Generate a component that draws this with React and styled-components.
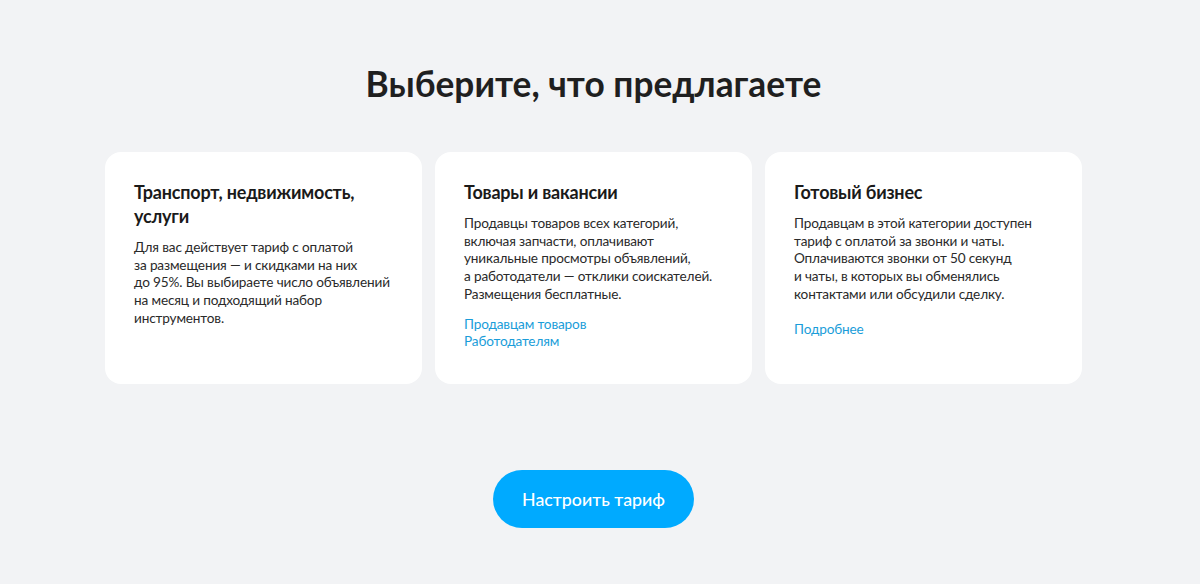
import React from "react";
import styled, { createGlobalStyle } from "styled-components";

const Global = createGlobalStyle`
  html, body { margin: 0; padding: 0; }
  body {
    background: #f2f3f5;
    font-family: Lato, "Noto Sans", sans-serif;
    color: #1a1a1a;
    -webkit-font-smoothing: antialiased;
  }
`;

const Page = styled.main`
  min-height: 584px;
  display: flex;
  flex-direction: column;
  align-items: center;
  padding: 62px 13px 0 0;
  box-sizing: border-box;
`;

const Title = styled.h1`
  margin: 0;
  font-size: 35.3px;
  line-height: 44px;
  font-weight: 700;
  color: #1f1f1f;
`;

const Cards = styled.section`
  margin-top: 46px;
  display: grid;
  grid-template-columns: repeat(3, 317px);
  gap: 13px;
`;

const Card = styled.article`
  background: #ffffff;
  border-radius: 16px;
  height: 232px;
  box-sizing: border-box;
  padding: 28px 29px;
`;

const CardTitle = styled.h2`
  margin: 0;
  font-size: 18px;
  line-height: 24px;
  font-weight: 700;
  letter-spacing: -0.2px;
  color: #1a1a1a;
`;

const Text = styled.p`
  margin: 11px 0 0;
  font-size: 13.6px;
  line-height: 17.7px;
  letter-spacing: -0.15px;
  color: #2a2a2a;
  white-space: nowrap;
`;

const Links = styled.div`
  margin-top: ${(p) => p.$offset || 12}px;
  display: flex;
  flex-direction: column;
`;

const Link = styled.a`
  font-size: 13.6px;
  line-height: 17px;
  letter-spacing: -0.15px;
  color: #1a9dd9;
  text-decoration: none;
`;

const Button = styled.button`
  margin-top: 86px;
  width: 201px;
  height: 58px;
  border: none;
  border-radius: 29px;
  background: #00aaff;
  color: #ffffff;
  font-family: Lato, "Noto Sans", sans-serif;
  font-size: 17.8px;
  font-weight: 500;
  cursor: pointer;
`;

export default function App() {
  return (
    <>
      <Global />
      <Page>
        <Title>Выберите, что предлагаете</Title>
        <Cards>
          <Card>
            <CardTitle>Транспорт, недвижимость,<br />услуги</CardTitle>
            <Text>
              Для вас действует тариф с оплатой<br />
              за размещения — и скидками на них<br />
              до 95%. Вы выбираете число объявлений<br />
              на месяц и подходящий набор<br />
              инструментов.
            </Text>
          </Card>
          <Card>
            <CardTitle>Товары и вакансии</CardTitle>
            <Text>
              Продавцы товаров всех категорий,<br />
              включая запчасти, оплачивают<br />
              уникальные просмотры объявлений,<br />
              а работодатели — отклики соискателей.<br />
              Размещения бесплатные.
            </Text>
            <Links>
              <Link href="#">Продавцам товаров</Link>
              <Link href="#">Работодателям</Link>
            </Links>
          </Card>
          <Card>
            <CardTitle>Готовый бизнес</CardTitle>
            <Text>
              Продавцам в этой категории доступен<br />
              тариф с оплатой за звонки и чаты.<br />
              Оплачиваются звонки от 50 секунд<br />
              и чаты, в которых вы обменялись<br />
              контактами или обсудили сделку.
            </Text>
            <Links $offset={17}>
              <Link href="#">Подробнее</Link>
            </Links>
          </Card>
        </Cards>
        <Button>Настроить тариф</Button>
      </Page>
    </>
  );
}
